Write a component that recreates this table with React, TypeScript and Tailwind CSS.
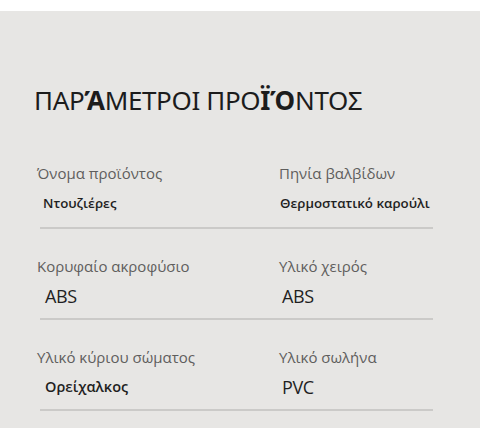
const rows = [
  {
    left: { label: "Όνομα προϊόντος", value: "Ντουζιέρες", kind: "small" },
    right: { label: "Πηνία βαλβίδων", value: "Θερμοστατικό καρούλι", kind: "small" },
  },
  {
    left: { label: "Κορυφαίο ακροφύσιο", value: "ABS", kind: "big" },
    right: { label: "Υλικό χειρός", value: "ABS", kind: "big" },
  },
  {
    left: { label: "Υλικό κύριου σώματος", value: "Ορείχαλκος", kind: "mid" },
    right: { label: "Υλικό σωλήνα", value: "PVC", kind: "big" },
  },
];

type Cell = { label: string; value: string; kind: string };

function Field({ cell, left }: { cell: Cell; left?: boolean }) {
  const valueCls =
    cell.kind === "small"
      ? "text-[13.3px] font-semibold"
      : cell.kind === "mid"
        ? "text-[14.5px] font-semibold"
        : "text-[18px] font-normal tracking-[-0.4px]";

  const offset =
    cell.kind === "small" ? (left ? "ml-[6px]" : "ml-[1px]") : left ? "ml-[8px]" : "ml-[3px]";

  return (
    <div className={left ? "w-[242px] -ml-[3px]" : "flex-1"}>
      <div className="text-[15px] leading-[20px] text-[#5f5e5d]">{cell.label}</div>
      <div className={`mt-[8px] h-[24px] leading-[24px] text-[#1f1f1f] ${valueCls} ${offset}`}>
        {cell.value}
      </div>
    </div>
  );
}

export default function App() {
  return (
    <div className="w-[480px] h-[428px] bg-white pt-[11px] font-['Open_Sans','Noto_Sans',sans-serif]">
      <div className="h-[417px] bg-[#e7e6e4] pt-[73px]">
        {/* TITLE */}
        <h1 className="ml-[34px] text-[26px] leading-[32px] tracking-[-0.35px] text-[#1c1c1c] font-['Noto_Sans',sans-serif]">
          ΠΑΡ<span className="font-bold">Ά</span>ΜΕΤΡΟΙ ΠΡΟ
          <span className="font-bold">ΪΌ</span>ΝΤΟΣ
        </h1>

        {/* PARAMETER GRID */}
        <div className="ml-[40px] w-[393px] mt-[20px]">
          {rows.map((row, i) => (
            <div
              key={i}
              className={`flex border-b-2 border-[#cbcac8] ${
                i === 0 ? "pt-[27px] pb-[12px]" : "pt-[27px] pb-[10px]"
              }`}
            >
              <Field cell={row.left} left />
              <Field cell={row.right} />
            </div>
          ))}
        </div>
      </div>
    </div>
  );
}
